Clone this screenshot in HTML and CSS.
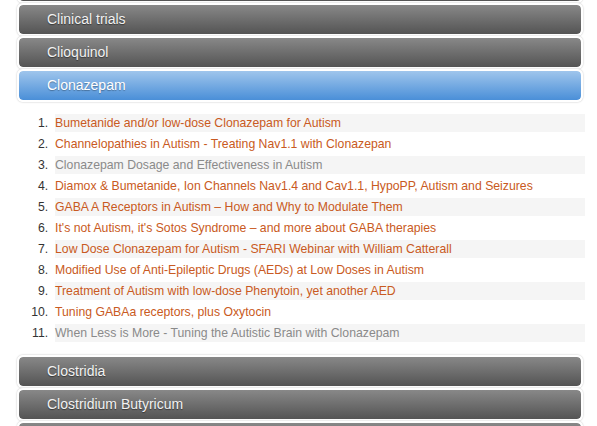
FILE: index.html
```html
<!DOCTYPE html>
<html>
<head>
<meta charset="utf-8">
<link rel="stylesheet" href="styles.css">
</head>
<body>
<div class="accordion">
  <div class="bar"><span>Cinnarizine</span></div>
  <div class="bar"><span>Clinical trials</span></div>
  <div class="bar"><span>Clioquinol</span></div>
  <div class="bar active"><span>Clonazepam</span></div>
  <ol class="posts">
    <li><a href="#">Bumetanide and/or low-dose Clonazepam for Autism</a></li>
    <li><a href="#">Channelopathies in Autism - Treating Nav1.1 with Clonazepan</a></li>
    <li><a href="#" class="visited">Clonazepam Dosage and Effectiveness in Autism</a></li>
    <li><a href="#">Diamox &amp; Bumetanide, Ion Channels Nav1.4 and Cav1.1, HypoPP, Autism and Seizures</a></li>
    <li><a href="#">GABA A Receptors in Autism – How and Why to Modulate Them</a></li>
    <li><a href="#">It's not Autism, it's Sotos Syndrome – and more about GABA therapies</a></li>
    <li><a href="#">Low Dose Clonazepam for Autism - SFARI Webinar with William Catterall</a></li>
    <li><a href="#">Modified Use of Anti-Epileptic Drugs (AEDs) at Low Doses in Autism</a></li>
    <li><a href="#">Treatment of Autism with low-dose Phenytoin, yet another AED</a></li>
    <li><a href="#">Tuning GABAa receptors, plus Oxytocin</a></li>
    <li><a href="#" class="visited">When Less is More - Tuning the Autistic Brain with Clonazepam</a></li>
  </ol>
  <div class="bar"><span>Clostridia</span></div>
  <div class="bar"><span>Clostridium Butyricum</span></div>
  <div class="bar"><span>Cognitive function</span></div>
</div>
</body>
</html>
```

FILE: styles.css
```css
html, body {
  margin: 0;
  padding: 0;
  background: #fff;
  overflow: hidden;
}
body {
  font-family: "Liberation Sans", Arial, sans-serif;
}
.accordion {
  margin-top: -30px;
  padding-left: 17px;
  width: 566px;
}
.bar {
  box-sizing: border-box;
  height: 33px;
  border: 2px solid #fff;
  border-radius: 6px;
  box-shadow: 0 0 2px rgba(0, 0, 0, 0.28);
  background: linear-gradient(to bottom, #888888 0%, #545454 100%);
  background-clip: padding-box;
  display: flex;
  align-items: center;
  padding-left: 28px;
  padding-bottom: 2px;
}
.bar span {
  color: #f2f2f2;
  font-size: 14px;
  text-shadow: 0 1px 1px rgba(0, 0, 0, 0.45);
}
.bar.active {
  background: linear-gradient(to bottom, #9fc5ec 0%, #4a8fd8 100%);
  background-clip: padding-box;
}
.bar.active span {
  color: #fff;
  text-shadow: 0 1px 1px rgba(0, 0, 0, 0.3);
}
.posts {
  margin: 12px -2px 13px 0;
  padding: 0 0 0 38px;
  font-size: 12.25px;
  color: #333;
}
.posts li {
  height: 18px;
  line-height: 18px;
  margin-bottom: 3px;
}
.posts li::marker {
  content: counter(list-item) ".\00a0\00a0";
}
.posts li:nth-child(odd) {
  background: #f5f5f5;
}
.posts a {
  color: #c95a22;
  text-decoration: none;
}
.posts a.visited {
  color: #8a8a8a;
}
```
